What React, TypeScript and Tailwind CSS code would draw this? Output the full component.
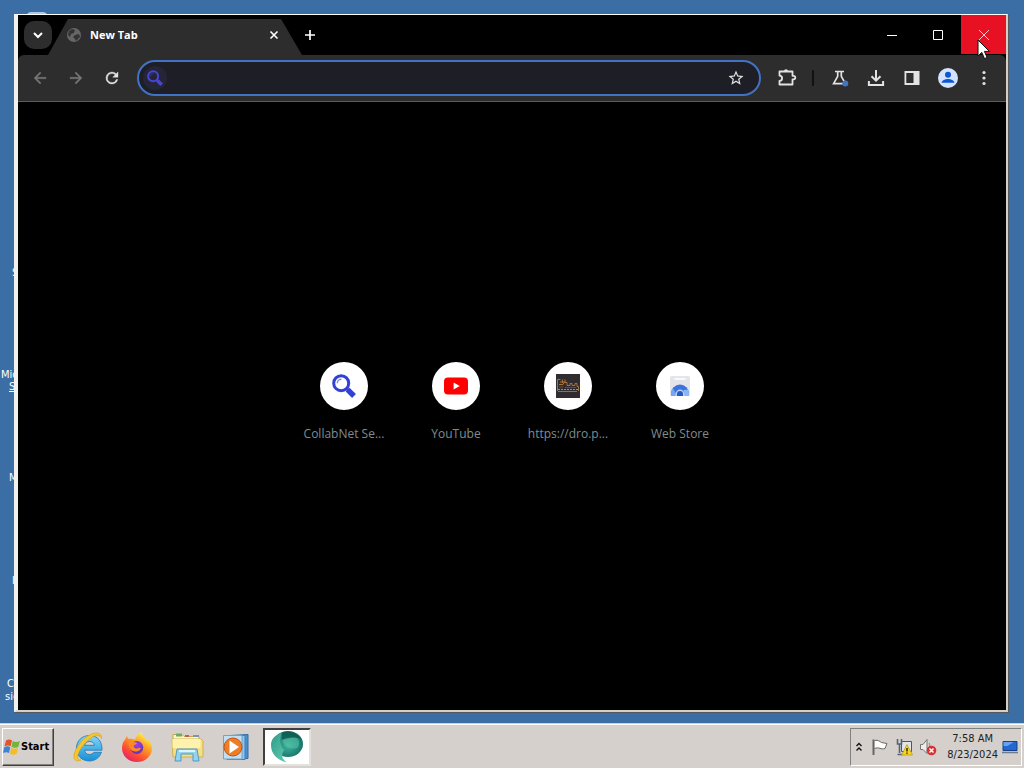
import React from "react";

const desktopLabels = [
  { id: "s", text: "S", place: "left-[12px] top-[267px] w-8" },
  { id: "mic", text: "Microsoft", place: "left-[1px] top-[369px] w-16" },
  { id: "s2", text: "Store", place: "left-[9px] top-[381px] w-16 underline" },
  { id: "m", text: "Mail", place: "left-[9px] top-[472px] w-16" },
  { id: "i", text: "Info", place: "left-[12px] top-[575px] w-16" },
  { id: "c", text: "Collab", place: "left-[7px] top-[678px] w-16" },
  { id: "sie", text: "sie", place: "left-[5px] top-[691px] w-16" },
];

function DesktopLabels() {
  return (
    <>
      <div className="absolute left-[27px] top-[12px] h-2 w-5 rounded-full bg-[#a9c8ea]" />
      {desktopLabels.map((l) => (
        <span
          key={l.id}
          className={`absolute whitespace-nowrap text-[11px] leading-3 text-white font-['DejaVu_Sans_Condensed','DejaVu_Sans',sans-serif] ${l.place}`}
        >
          {l.text}
        </span>
      ))}
    </>
  );
}

function Magnifier({ className }: { className: string }) {
  return (
    <svg viewBox="0 0 24 24" className={className} aria-hidden="true">
      <circle cx="9.2" cy="9.2" r="7.5" fill="none" stroke="currentColor" strokeWidth="3" />
      <path d="M5.3 9.2a3.9 3.9 0 0 1 4.2-4" fill="none" stroke="currentColor" strokeWidth="1.4" opacity=".6" />
      <path d="M14 14l3 3" stroke="currentColor" strokeWidth="3" />
      <path d="M15.6 15.6l6.4 6.400" stroke="currentColor" strokeWidth="5.4" />
    </svg>
  );
}

function TabStrip() {
  return (
    <div className="flex h-10 items-stretch bg-black">
      <div className="flex items-center pl-1.5">
        <button aria-label="Search tabs" className="flex h-7 w-7 items-center justify-center rounded-[10px] bg-[#2d2d2d] text-white">
          <svg viewBox="0 0 16 16" className="h-4 w-4" fill="none" stroke="currentColor" strokeWidth="2">
            <path d="M4 6l4 4 4-4" />
          </svg>
        </button>
      </div>
      <div className="-ml-1 mt-1 flex w-[254px] items-center bg-[#2d2d2d] pb-1 pl-[18px] pr-[20px] [clip-path:polygon(20px_0,calc(100%-21px)_0,100%_100%,0_100%)]">
        <svg viewBox="0 0 16 16" className="h-4 w-4 shrink-0" aria-hidden="true">
          <circle cx="8" cy="8" r="7" fill="#666" />
          <path d="M3 4l3-2 3 1-1 3-3 1-1 3-2-2zM9 8l4-1 1 3-4 4-1-2-2-2z" fill="#333" />
        </svg>
        <span className="ml-2 flex-1 text-[11px] font-bold text-white">New Tab</span>
        <button aria-label="Close tab" className="flex h-4 w-4 items-center justify-center text-white">
          <svg viewBox="0 0 16 16" className="h-4 w-4" fill="none" stroke="currentColor" strokeWidth="1.6">
            <path d="M4.500 4.500l7 7M11.500 4.500l-7 7" />
          </svg>
        </button>
      </div>
      <button aria-label="New tab" className="flex w-4 items-center justify-center text-white">
        <svg viewBox="0 0 16 16" className="h-4 w-4" fill="none" stroke="currentColor" strokeWidth="1.7">
          <path d="M8 3v10M3 8h10" />
        </svg>
      </button>
      <div className="ml-auto flex h-[39px] text-white">
        <button aria-label="Minimize" className="flex w-[46px] items-center justify-center">
          <svg viewBox="0 0 12 12" className="h-3 w-3" stroke="currentColor"><path d="M1 6.500h10" /></svg>
        </button>
        <button aria-label="Maximize" className="flex w-[46px] items-center justify-center">
          <svg viewBox="0 0 12 12" className="h-3 w-3" fill="none" stroke="currentColor"><path d="M1.500 1.500h9v9h-9z" /></svg>
        </button>
        <button aria-label="Close" className="flex w-[45px] items-center justify-center bg-[#e81123]">
          <svg viewBox="0 0 12 12" className="h-3 w-3" fill="none" stroke="#ffc9ce"><path d="M1 1l10 10M11 1L1 11" /></svg>
        </button>
      </div>
    </div>
  );
}

const navIcons = {
  back: "M20 11H7.83l5.59-5.59L12 4l-8 8 8 8 1.41-1.41L7.83 13H20v-2z",
  forward: "M12 4l-1.41 1.41L16.17 11H4v2h12.17l-5.58 5.59L12 20l8-8z",
  reload:
    "M17.65 6.35A7.96 7.96 0 0 0 12 4a8 8 0 1 0 7.73 10h-2.08A6 6 0 1 1 12 6c1.66 0 3.14.69 4.22 1.78L13 11h7V4l-2.35 2.35z",
};

function NavButton({ label, d, tone }: { label: string; d: string; tone: string }) {
  return (
    <button aria-label={label} className={`flex h-8 w-9 items-center justify-center ${tone}`}>
      <svg viewBox="0 0 24 24" className="h-[18px] w-[18px]" fill="currentColor" stroke="currentColor" strokeWidth=".5"><path d={d} /></svg>
    </button>
  );
}

function ToolButton({ label, children }: { label: string; children: React.ReactNode }) {
  return (
    <button aria-label={label} className="flex h-8 w-9 items-center justify-center text-[#e3e3e3]">
      <svg viewBox="0 0 20 20" className="h-5 w-5" fill="none" stroke="currentColor" strokeWidth="1.8">
        {children}
      </svg>
    </button>
  );
}

function Toolbar() {
  return (
    <div className="flex h-[47px] items-center rounded-tl-md rounded-tr-md border-b border-[#5c5c5c] bg-[#2d2d2d] pl-1 pr-1">
      <NavButton label="Back" d={navIcons.back} tone="text-[#757575]" />
      <NavButton label="Forward" d={navIcons.forward} tone="text-[#757575]" />
      <NavButton label="Reload" d={navIcons.reload} tone="text-[#e3e3e3]" />
      <div className="ml-[7px] flex h-9 min-w-0 flex-1 items-center rounded-full border-2 border-[#4272c4] bg-[#1e1f26] pl-1 pr-3.5">
        <span className="flex h-6 w-6 items-center justify-center rounded-full bg-[#25253a]">
          <Magnifier className="h-4 w-4 text-[#4646d2]" />
        </span>
        <input aria-label="Address and search bar" className="h-7 min-w-0 flex-1 bg-transparent px-2 text-sm text-white outline-none" />
        <button aria-label="Bookmark this tab" className="text-[#e3e3e3]">
          <svg viewBox="0 0 24 24" className="h-[18px] w-[18px]" fill="currentColor">
            <path d="M22 9.24l-7.19-.62L12 2 9.19 8.63 2 9.24l5.46 4.73L5.82 21 12 17.27 18.18 21l-1.63-7.03L22 9.24zM12 15.4l-3.76 2.27 1-4.28-3.32-2.88 4.38-.38L12 6.1l1.71 4.04 4.38.38-3.32 2.88 1 4.28L12 15.4z" />
          </svg>
        </button>
      </div>
      <div className="ml-2 flex items-center">
        <ToolButton label="Extensions">
          <path d="M2.500 3.500h13v4.300h1a1.500 1.500 0 0 1 0 3.600h-1v5.100h-13v-3.700a2.600 2.600 0 0 0 0-5.200z" strokeLinejoin="round" />
          <path d="M7 3.200a2 2 0 0 1 4 0z" fill="currentColor" stroke="none" />
        </ToolButton>
        <span className="mx-[7px] h-4 w-0.5 rounded bg-[#111]" />
        <span className="ml-px flex">
          <ToolButton label="Experiments">
            <path d="M5 3.500h9M7.700 3.500v4.900L3.600 15.700h11.800L11.300 8.400V3.500" strokeWidth="1.700" />
            <circle cx="15.300" cy="15.600" r="3" fill="#3f76c6" stroke="none" />
          </ToolButton>
          <ToolButton label="Downloads">
            <path d="M10 2v10M5.500 8.200l4.500 4.500 4.500-4.500M2.900 13v4h14.200v-4" strokeWidth="2" />
          </ToolButton>
          <ToolButton label="Side panel">
            <path d="M3.400 4h13.200v12H3.400z" />
            <path d="M11.500 4h5v12h-5z" fill="currentColor" stroke="none" />
          </ToolButton>
          <ToolButton label="Profile">
            <circle cx="10" cy="10" r="10" fill="#d3e3fd" stroke="none" />
            <circle cx="10" cy="6.800" r="3" fill="#0b57d0" stroke="none" />
            <path d="M3.600 14.800c0-2.500 4-3.800 6.400-3.800s6.400 1.300 6.400 3.800z" fill="#0b57d0" stroke="none" />
          </ToolButton>
          <ToolButton label="Menu">
            <g fill="currentColor" stroke="none">
              <circle cx="10" cy="4.500" r="1.600" /><circle cx="10" cy="10" r="1.600" /><circle cx="10" cy="15.500" r="1.600" />
            </g>
          </ToolButton>
        </span>
      </div>
    </div>
  );
}

function Shortcut({ label, children }: { label: string; children: React.ReactNode }) {
  return (
    <a href="#" className="flex w-28 flex-col items-center">
      <span className="flex h-12 w-12 items-center justify-center rounded-full bg-white">{children}</span>
      <span className="mt-4 whitespace-nowrap text-xs text-[#7f8d91]">{label}</span>
    </a>
  );
}

function NewTabPage() {
  return (
    <main className="flex flex-1 items-start justify-center bg-black pt-[260px]">
      <nav className="flex" aria-label="Shortcuts">
        <Shortcut label="CollabNet Se...">
          <Magnifier className="h-6 w-6 text-[#3340d6]" />
        </Shortcut>
        <Shortcut label="YouTube">
          <svg viewBox="0 0 24 24" className="h-6 w-6">
            <rect y="3.500" width="24" height="17" rx="4" fill="#f00" />
            <path d="M9.600 8.400v7.200l6.200-3.600z" fill="#fff" />
          </svg>
        </Shortcut>
        <Shortcut label="https://dro.p...">
          <svg viewBox="0 0 24 24" className="h-6 w-6" fill="none">
            <path d="M0 0h24v24H0z" fill="#302c30" />
            <path d="M1.500 17V5.500h3M4 8h5V5.500M6.500 5.500V9M3 10.500h4l1-2h3v3h3V9.500h2v2h3V9.500h2v3h1.500V17" stroke="#a8703a" />
            <path d="M3 13h4M9 13.500h11" stroke="#6d4a32" />
            <path d="M2 15.500h20" stroke="#b1912f" strokeDasharray="2 1" />
            <path d="M2 17.500h19" stroke="#8d7a30" />
          </svg>
        </Shortcut>
        <Shortcut label="Web Store">
          <svg viewBox="0 0 24 24" className="h-6 w-6">
            <rect x="2" y="2" width="20" height="20" rx="1.500" fill="#e4e5ea" />
            <path d="M7 5h10" stroke="#fff" strokeWidth="1.600" strokeLinecap="round" />
            <path d="M3 22v-2.500a9 9 0 0 1 18 0V22z" fill="#3b74dc" />
            <path d="M3 22v-2.500c0-2 .7-3.700 1.800-5.200L8.500 20v2z" fill="#77a5ef" />
            <path d="M15.500 16l4.500-.500c.7 1.200 1 2.600 1 4V22h-5z" fill="#8eb5f4" />
            <path d="M7.600 22v-2a4.400 4.400 0 0 1 8.800 0v2z" fill="#b7d0f8" />
            <path d="M9 22v-2a3 3 0 0 1 6 0v2z" fill="#245cc5" />
          </svg>
        </Shortcut>
      </nav>
    </main>
  );
}

function Cursor() {
  return (
    <svg viewBox="0 0 13 21" className="absolute right-[34px] top-[39px] h-[21px] w-[13px]" aria-hidden="true">
      <path d="M1 1v16l3.800-3.600 2.700 6.200 2.600-1.100-2.700-6.100h5z" fill="#fff" stroke="#111" strokeWidth="1" />
    </svg>
  );
}

function IeIcon() {
  return (
    <svg viewBox="0 0 32 32" className="h-8 w-8">
      <defs>
        <linearGradient id="ie" x1="0" y1="0" x2="0" y2="1">
          <stop offset="0" stopColor="#7fd6fa" /><stop offset="1" stopColor="#198fd6" />
        </linearGradient>
      </defs>
      <path d="M30 19.200H12.600c.3 2.800 2.300 4.200 4.900 4.200 2 0 3.400-.6 4.300-2.100h7.600c-1.700 5.300-6.300 8.700-11.900 8.700C9.800 30 4.400 24.800 4.400 17.300S10 4.500 17.600 4.500c8 0 12.800 6 12.400 14.700zM12.700 14.300h9.700c-.3-2.500-2.100-3.800-4.700-3.800s-4.500 1.300-5 3.800z" fill="url(#ie)" stroke="#1878b8" strokeWidth=".8" />
      <path d="M29.500 7.500C30 2 24.500 0 17.500 4 9 8.500 1 20.500 2 26.500c.6 3.600 3.600 4 7 2.500-3 .3-4-2-3-5.500C8 17 14.500 10 20.500 6c4-2 7.500-2.300 9 1.500z" fill="#f5c62c" stroke="#d69d17" strokeWidth=".6" />
    </svg>
  );
}

function FirefoxIcon() {
  return (
    <svg viewBox="0 0 32 32" className="h-8 w-8">
      <defs>
        <linearGradient id="ff" x1=".8" y1=".1" x2=".2" y2="1">
          <stop offset="0" stopColor="#fff04a" /><stop offset=".35" stopColor="#ff9a22" />
          <stop offset=".7" stopColor="#fb4a36" /><stop offset="1" stopColor="#e21b72" />
        </linearGradient>
        <radialGradient id="fp" cx=".5" cy=".3" r=".7">
          <stop offset="0" stopColor="#a03bea" /><stop offset="1" stopColor="#5b37bb" />
        </radialGradient>
      </defs>
      <path d="M21 1c-.5 2.500 1 4 2.500 5.500 1.500 1.200 2 2.500 2.300 3.500.4-.8.400-1.800.2-2.500C29 10 31 13.500 31 17.500 31 25 24.500 31 16 31S1 25 1 17c0-4 1.500-7 3.500-9 0 0 .3-2 1.700-3 0 1.500.8 2.500 1.800 3 2.500-.5 4-.2 6 .6C15.500 4.500 17.500 2.500 21 1z" fill="url(#ff)" />
      <circle cx="15.800" cy="16.500" r="6.500" fill="url(#fp)" />
      <path d="M7.500 10c2-1 4.500-.5 5.500 1.200 1.500 0 3 .4 3 1.300-.3 1-2.500 1-3.200 2.500-.3 2 2 3.200 4.200 2.200 1.500-.7 2.500-.2 2.800.3-1.200 2.700-4 3.500-6.500 2.800C9.500 20 7 15.500 7.500 10z" fill="#ff8a20" />
    </svg>
  );
}

function FolderIcon() {
  return (
    <svg viewBox="0 0 34 32" className="h-8 w-[34px]">
      <path d="M3 8V3.500h9l2 2h15V9" fill="#fff6c0" stroke="#c3a94d" />
      <path d="M6 2.500h6v3H6z" fill="#6cab66" /><path d="M15 4h4v2h-4z" fill="#bd6159" /><path d="M23 4h6v2h-6z" fill="#7894b9" />
      <path d="M2 8h29l2 2v16H3z" fill="#f7df83" stroke="#d0b251" />
      <path d="M2.500 8h28v9h-28z" fill="#fff2ac" />
      <path d="M5 30l2-12h20l2 12h-6v-7H11v7z" fill="#94d2ed" stroke="#4c9bc5" />
      <path d="M9 20h16" stroke="#dcf4ff" strokeWidth="2" />
    </svg>
  );
}

function MediaIcon() {
  return (
    <svg viewBox="0 0 30 30" className="h-[30px] w-[30px]">
      <path d="M9 3.500l18-1v24l-18 1z" fill="#4c91ce" stroke="#2c6bab" />
      <path d="M6 3.500h18v24H6z" fill="#94c3e9" stroke="#3d7fb8" />
      <path d="M2.500 3.500h18.500v23.500H2.500z" fill="#c2def2" stroke="#6ea3ca" />
      <circle cx="12" cy="15" r="9" fill="#ed7d27" stroke="#bf5514" />
      <path d="M8.500 8.500v13l9.500-6.500z" fill="#fff" />
    </svg>
  );
}

function TealIcon() {
  return (
    <svg viewBox="0 0 34 34" className="h-[34px] w-[34px]">
      <defs>
        <radialGradient id="tl" cx=".5" cy=".55" r=".6">
          <stop offset="0" stopColor="#42b59c" /><stop offset="1" stopColor="#0f675f" />
        </radialGradient>
        <linearGradient id="tt" x1="0" y1="0" x2="1" y2="1">
          <stop offset="0" stopColor="#2f9b87" /><stop offset="1" stopColor="#62cdb4" />
        </linearGradient>
      </defs>
      <ellipse cx="18" cy="14" rx="15" ry="13" fill="url(#tl)" />
      <path d="M12 3C5 5 1 9 1 15c0 9 6 15 16 17.500-4-3-5.500-5.500-4.500-9 .3-1.500 1-2.500 2-3.500C10 17 9 9 12 3z" fill="url(#tt)" />
      <path d="M12 9c2 8 8 11 15 9 2.500-2 3-6 1-9-4-3-11-3-16 0z" fill="#56c4ac" opacity=".55" />
      <path d="M12 3c6-3 15-1 19 6-6-3-13-1-19 1z" fill="#0f574f" opacity=".8" />
    </svg>
  );
}

function StartFlag() {
  return (
    <svg viewBox="0 0 17 18" className="h-[18px] w-[17px]" aria-hidden="true">
      <path d="M3 2.500C6 .8 7.500 1.300 9 2.500L7.600 8.300C6 7.300 4 7.200 1.500 8.300z" fill="#e5532d" />
      <path d="M9.800 3c2 1.300 4.200 1.300 7 0L15.300 9c-2.300 1-4.800 1-6.800-.2z" fill="#72b43c" />
      <path d="M1.200 9.200c2.500-1.200 4.500-1 6.100 0L6 15c-1.800-1-3.700-1-6 0z" fill="#3e83d4" />
      <path d="M8.200 9.800c2 1.200 4.400 1.200 6.800.2l-1.500 6c-2.200 1-4.600 1-6.700-.2z" fill="#f4bd28" />
    </svg>
  );
}

function Tray() {
  return (
    <div className="mr-0.5 flex h-[38px] items-center border border-b-white border-l-[#808080] border-r-white border-t-[#808080] pl-1 text-[#222]">
      <button aria-label="Show hidden icons" className="flex h-6 w-2 items-center">
        <svg viewBox="0 0 8 10" className="h-2.5 w-2" fill="none" stroke="#111" strokeWidth="1.400"><path d="M1.500 4L4 1.500 6.500 4M1.500 8.500L4 6l2.500 2.500" /></svg>
      </button>
      <button aria-label="Action Center" className="ml-2">
        <svg viewBox="0 0 18 18" className="h-[18px] w-[18px]" fill="#fff" stroke="#666"><path d="M3.500 2.500c4-1 5 1 7 2l5.500 1-2 5c-4 1.500-6-2-10.500 0" /><path d="M2.500 1.500v15.500" strokeWidth="2" /></svg>
      </button>
      <button aria-label="Network" className="ml-1.5">
        <svg viewBox="0 0 18 18" className="h-[18px] w-[18px]"><path d="M6.500 3.500h10v10h-10z" fill="#dfe5e8" stroke="#555" /><path d="M2.500 1v5h4V1M4.500 6v9M2.500 16.500h5" fill="none" stroke="#56627d" strokeWidth="1.600" /><path d="M12 6.500l5.500 10.500h-11z" fill="#fbd51c" stroke="#a68a14" strokeWidth=".6" /><path d="M12 10v3.500M12 14.500v1.300" stroke="#111" strokeWidth="1.300" /></svg>
      </button>
      <button aria-label="Volume" className="ml-1.5">
        <svg viewBox="0 0 18 18" className="h-[18px] w-[18px]"><path d="M1.500 6.500H4l4-5v14l-4-4H1.500z" fill="#eee" stroke="#777" /><path d="M10 5c1 1 1 3 0 5" fill="none" stroke="#888" /><circle cx="12.500" cy="12.500" r="4.800" fill="#d83131" /><path d="M10.500 10.500l4 4M14.500 10.500l-4 4" stroke="#fff" strokeWidth="1.500" /></svg>
      </button>
      <div className="ml-2.5 text-center text-[11px] leading-4">
        <div>7:58 AM</div>
        <div>8/23/2024</div>
      </div>
      <button aria-label="Show desktop" className="ml-1 mr-[3px]">
        <svg viewBox="0 0 16 14" className="h-3.5 w-4"><path d="M1 1.500h14v9H1z" fill="#2467d3" stroke="#173f82" /><path d="M1.500 2h10l-6 4h-4z" fill="#6aa2ef" /><path d="M0 12.500h16" stroke="#6b7b91" strokeWidth="1.500" /></svg>
      </button>
    </div>
  );
}

function Taskbar() {
  return (
    <footer className="flex h-11 items-center border-t border-white bg-[#d5d0cb] pt-px font-['DejaVu_Sans_Condensed','DejaVu_Sans',sans-serif] shadow-[0_-1px_0_#d4d0c8]">
      <button className="ml-0.5 flex h-[38px] w-[52px] items-center gap-px border border-b-[#404040] border-l-white border-r-[#404040] border-t-white text-[11px] font-bold text-black shadow-[inset_-1px_-1px_0_#808080]">
        <StartFlag />
        Start
      </button>
      <div className="ml-[18px] flex items-center gap-[17px]">
        <button aria-label="Internet Explorer"><IeIcon /></button>
        <button aria-label="Firefox"><FirefoxIcon /></button>
        <button aria-label="File Explorer"><FolderIcon /></button>
        <button aria-label="Media Player"><MediaIcon /></button>
      </div>
      <button aria-label="Active application" className="ml-3 flex h-[38px] w-12 items-center justify-center border-2 border-b-[#e4e2dc] border-l-[#404040] border-r-[#e4e2dc] border-t-[#404040] bg-white">
        <TealIcon />
      </button>
      <div className="flex-1" />
      <Tray />
    </footer>
  );
}

export default function App() {
  return (
    <div className="flex min-h-screen flex-col bg-[#3a6ea5] font-['Open_Sans','Noto_Sans',sans-serif]">
      <div className="relative flex flex-1 flex-col overflow-hidden pb-3 pl-[14px] pr-4 pt-[14px]">
        <DesktopLabels />
        <section className="relative flex flex-1 flex-col border-b-2 border-l-4 border-r-2 border-t border-b-[#d4d0c8] border-l-[#f2f1ee] border-r-[#d4d0c8] border-t-white bg-black shadow-[1px_1px_0_#55595c]">
          <TabStrip />
          <Toolbar />
          <NewTabPage />
        </section>
        <Cursor />
      </div>
      <Taskbar />
    </div>
  );
}
